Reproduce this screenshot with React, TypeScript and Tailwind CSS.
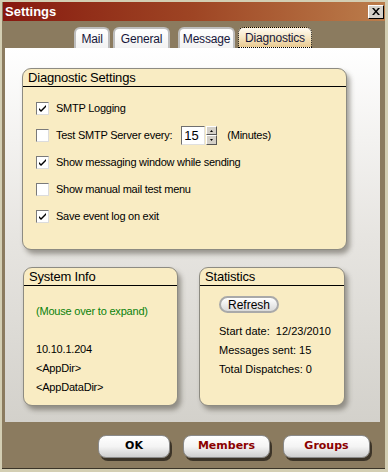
import React from 'react';

const font = { fontFamily: '"Liberation Sans", Arial, sans-serif' };

const Check = ({ checked }: { checked: boolean }) => (
  <div className="w-[13px] h-[13px] shrink-0 bg-white border border-t-[#7a7a7a] border-l-[#7a7a7a] border-r-[#dcdcdc] border-b-[#dcdcdc] flex items-center justify-center">
    {checked && (
      <svg width="9" height="9" viewBox="0 0 9 9">
        <path d="M1 4 L3 6 L8 1 L8 3 L3 8 L1 6 Z" fill="#000" />
      </svg>
    )}
  </div>
);

const Box = ({ title, className, children }: { title: string; className: string; children: React.ReactNode }) => (
  <div className={`rounded-[9px] border border-[#8d8b82] bg-[#f9ecc3] shadow-[3px_4px_5px_rgba(60,55,45,0.45)] overflow-hidden ${className}`}>
    <div className="h-[18px] px-[5px] border-b border-black text-[13px] leading-[18px] text-black tracking-[-0.2px]">{title}</div>
    {children}
  </div>
);

const Tab = ({ label, w, active }: { label: string; w: string; active?: boolean }) => (
  <div
    className={`${w} h-[21px] rounded-t-[6px] flex items-center justify-center text-[12px] text-[#16163a] tracking-[-0.2px] ${
      active
        ? 'border border-dotted border-black bg-gradient-to-b from-[#fffaf0] via-[#f6e6c4] to-[#e9c990]'
        : 'border-2 border-b-0 border-[#bdbdbd] bg-gradient-to-b from-white to-[#f2f2f2]'
    }`}
  >
    {label}
  </div>
);

const Btn = ({ label, w, red }: { label: string; w: string; red?: boolean }) => (
  <div
    className={`${w} h-[23px] rounded-[8px] border border-[#8a8a8a] bg-gradient-to-b from-white via-[#f4f4f4] to-[#cfcfcf] shadow-[2px_3px_0_#3c3428] flex items-center justify-center text-[11px] font-bold ${
      red ? 'text-[#8b0000]' : 'text-black'
    }`}
    style={{ fontFamily: '"DejaVu Sans", Verdana, sans-serif' }}
  >
    {label}
  </div>
);

export default function App() {
  return (
    <div className="w-[388px] h-[472px] bg-[#d3ceb3] pl-[2px] pr-[3px] pt-[2px] pb-[3px]" style={font}>
      <div className="w-full h-full bg-[#8b7b5f] flex flex-col border-b border-[#3a3428]">
        {/* Title bar */}
        <div className="h-[19px] ml-[1px] flex items-center justify-between bg-gradient-to-r from-[#87170f] via-[#9e4524] to-[#bb7d4b]">
          <span className="pl-[2px] text-[13px] font-bold text-white leading-none">Settings</span>
          <div className="w-[16px] h-[14px] mr-[1px] bg-[#d4d0c8] border border-t-white border-l-white border-r-black border-b-black flex items-center justify-center">
            <svg width="8" height="7" viewBox="0 0 8 7">
              <path d="M0 0 L2 0 L4 2.5 L6 0 L8 0 L5 3.5 L8 7 L6 7 L4 4.5 L2 7 L0 7 L3 3.5 Z" fill="#000" />
            </svg>
          </div>
        </div>

        {/* Tabs */}
        <div className="h-[27px] flex items-end pl-[72px] gap-[3px]">
          <Tab label="Mail" w="w-[36px]" />
          <Tab label="General" w="w-[57px]" />
          <div className="w-[2px]" />
          <Tab label="Message" w="w-[57px]" />
          <Tab label="Diagnostics" w="w-[74px]" active />
        </div>

        {/* Content panel */}
        <div className="ml-[3px] w-[375px] h-[374px] bg-gradient-to-b from-white via-[#e7e5e1] to-[#d3d1cb] pl-[17px] pt-[20px]">
          <Box title="Diagnostic Settings" className="w-[325px] h-[182px]">
            <div className="pl-[13px] pt-[12px] flex flex-col gap-[8px] text-[11px] text-black tracking-[-0.25px]">
              <div className="h-[19px] flex items-center gap-[7px]">
                <Check checked />
                <span>SMTP Logging</span>
              </div>
              <div className="h-[19px] flex items-center">
                <Check checked={false} />
                <span className="ml-[7px]">Test SMTP Server every:</span>
                <div className="ml-[9px] w-[24px] h-[19px] bg-white border border-t-[#6f6f6f] border-l-[#6f6f6f] border-r-[#e0e0e0] border-b-[#e0e0e0] text-[13px] leading-[17px] pl-[2px] tracking-normal">
                  15
                </div>
                <div className="ml-[1px] w-[11px] h-[19px] flex flex-col">
                  <div className="h-[9px] bg-[#d4d0c8] border border-t-white border-l-white border-r-[#555] border-b-[#555] flex items-center justify-center">
                    <svg width="3" height="2" viewBox="0 0 3 2"><path d="M1.5 0 L3 2 L0 2 Z" fill="#000" /></svg>
                  </div>
                  <div className="h-[10px] bg-[#d4d0c8] border border-t-white border-l-white border-r-[#555] border-b-[#555] flex items-center justify-center">
                    <svg width="3" height="2" viewBox="0 0 3 2"><path d="M0 0 L3 0 L1.5 2 Z" fill="#000" /></svg>
                  </div>
                </div>
                <span className="ml-[10px]">(Minutes)</span>
              </div>
              <div className="h-[19px] flex items-center gap-[7px]">
                <Check checked />
                <span>Show messaging window while sending</span>
              </div>
              <div className="h-[19px] flex items-center gap-[7px]">
                <Check checked={false} />
                <span>Show manual mail test menu</span>
              </div>
              <div className="h-[19px] flex items-center gap-[7px]">
                <Check checked />
                <span>Save event log on exit</span>
              </div>
            </div>
          </Box>

          <div className="mt-[17px] flex gap-[21px]">
            <Box title="System Info" className="w-[155px] h-[139px] ml-[1px]">
              <div className="pl-[12px] text-[11px] leading-[19px] text-black tracking-[-0.2px]">
                <div className="mt-[16px] text-[#0a820a]">(Mouse over to expand)</div>
                <div className="mt-[19px]">10.10.1.204</div>
                <div>&lt;AppDir&gt;</div>
                <div>&lt;AppDataDir&gt;</div>
              </div>
            </Box>
            <Box title="Statistics" className="w-[146px] h-[139px]">
              <div className="pl-[19px] text-[11px] text-black">
                <div className="mt-[10px] w-[60px] h-[17px] rounded-full border-2 border-[#a9a9a9] bg-gradient-to-b from-white to-[#d9d9d9] flex items-center justify-center text-[12px] leading-none">
                  Refresh
                </div>
                <div className="mt-[9px] leading-[19px]">
                  <div>Start date:&nbsp; 12/23/2010</div>
                  <div>Messages sent: 15</div>
                  <div>Total Dispatches: 0</div>
                </div>
              </div>
            </Box>
          </div>
        </div>

        {/* Buttons */}
        <div className="flex pl-[96px] pt-[13px] gap-[13px]">
          <Btn label="OK" w="w-[72px]" />
          <Btn label="Members" w="w-[87px]" red />
          <Btn label="Groups" w="w-[87px]" red />
        </div>
      </div>
    </div>
  );
}
